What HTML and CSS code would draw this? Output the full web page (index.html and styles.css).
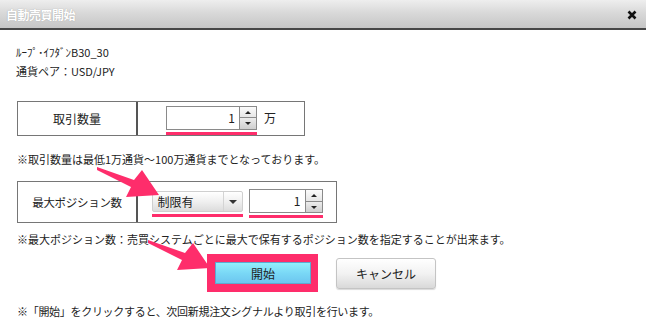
FILE: index.html
```html
<!DOCTYPE html>
<html lang="ja">
<head>
    <meta charset="UTF-8">
    <title>自動売買開始</title>
    <link rel="stylesheet" href="styles.css">
</head>
<body>
    <div class="dialog">
        <div class="titlebar">
            <span class="title">自動売買開始</span>
            <svg class="close" width="10" height="10" viewBox="0 0 10 10">
                <path d="M1.5 1.5 L8.5 8.5 M8.5 1.5 L1.5 8.5" stroke="#111" stroke-width="2.6"/>
            </svg>
        </div>

        <div class="content">
            <div class="info">
                <p>ﾙｰﾌﾟ･ｲﾌﾀﾞﾝB30_30</p>
                <p>通貨ペア：USD/JPY</p>
            </div>

            <div class="form-row row-amount">
                <div class="label">取引数量</div>
                <div class="field">
                    <div class="marked">
                        <div class="number">
                            <span class="value wide">1</span>
                            <div class="spin">
                                <span class="up"></span>
                                <span class="down"></span>
                            </div>
                        </div>
                    </div>
                    <span class="unit">万</span>
                </div>
            </div>
            <p class="note note-amount">※取引数量は最低1万通貨～100万通貨までとなっております。</p>

            <div class="form-row row-position">
                <div class="label">最大ポジション数</div>
                <div class="field">
                    <div class="marked">
                        <div class="select">
                            <span class="select-text">制限有</span>
                            <span class="select-arrow"></span>
                        </div>
                    </div>
                    <div class="marked">
                        <div class="number">
                            <span class="value">1</span>
                            <div class="spin">
                                <span class="up"></span>
                                <span class="down"></span>
                            </div>
                        </div>
                    </div>
                </div>
            </div>
            <p class="note note-position">※最大ポジション数：売買システムごとに最大で保有するポジション数を指定することが出来ます。</p>

            <div class="buttons">
                <div class="highlight">
                    <button class="btn btn-start">開始</button>
                </div>
                <button class="btn btn-cancel">キャンセル</button>
            </div>
            <p class="note note-start">※「開始」をクリックすると、次回新規注文シグナルより取引を行います。</p>
        </div>

        <svg class="arrow arrow-select" width="64" height="32" viewBox="0 0 64 32">
            <polygon points="0,0 37,13 45,3 62,28 29,30 34,20 0,3" fill="#fe2d6b"/>
        </svg>
        <svg class="arrow arrow-start" width="64" height="32" viewBox="0 0 64 32">
            <polygon points="0,0 37,13 45,3 62,28 29,30 34,20 0,3" fill="#fe2d6b"/>
        </svg>
    </div>
</body>
</html>
```

FILE: styles.css
```css
body {
    margin: 0;
    padding: 0;
    background: #fff;
    font-family: 'Noto Sans CJK JP', 'Noto Sans', sans-serif;
    color: #222;
}
p {
    margin: 0;
}
.dialog {
    position: relative;
    width: 646px;
    height: 335px;
    overflow: hidden;
}
.titlebar {
    height: 28px;
    display: flex;
    justify-content: space-between;
    align-items: center;
    padding: 0 9px 0 6px;
    background: linear-gradient(#eeeeee, #d9d9d9 45%, #c6c6c6);
    border-bottom: 2px solid #474747;
}
.title {
    color: #fff;
    font-size: 12px;
    font-weight: bold;
    letter-spacing: -0.5px;
    text-shadow: 0 0 1px #999;
}
.close {
    margin-top: 2px;
}
.content {
    padding: 13px 0 0 17px;
}
.info {
    font-size: 11px;
    line-height: 19px;
    margin-left: -1px;
}

/* Form rows */
.form-row {
    display: flex;
    border: 1px solid #767676;
    box-sizing: border-box;
}
.row-amount {
    margin-top: 20px;
    width: 288px;
    height: 35px;
}
.row-position {
    margin-top: 14px;
    width: 320px;
    height: 42px;
}
.label {
    width: 118px;
    display: flex;
    align-items: center;
    justify-content: center;
    font-size: 12px;
    border-right: 2px solid #555;
}
.row-position .label {
    font-size: 11.5px;
    letter-spacing: -0.3px;
}
.field {
    flex: 1;
    display: flex;
    align-items: center;
    justify-content: center;
    gap: 6px;
}
.row-amount .field {
    gap: 7px;
}
.row-position .field {
    padding-top: 3px;
}
.marked {
    border-bottom: 3px solid #fe2d6b;
    padding-bottom: 2px;
}
.row-amount .marked {
    margin-top: 3px;
}
.number {
    display: flex;
    height: 24px;
    border: 1px solid #8a8a8a;
    box-sizing: border-box;
    background: #fff;
}
.value {
    width: 51px;
    text-align: right;
    padding-right: 4px;
    font-size: 12px;
    line-height: 22px;
}
.value.wide {
    width: 68px;
}
.spin {
    width: 16px;
    display: flex;
    flex-direction: column;
    border-left: 1px solid #8a8a8a;
}
.spin span {
    flex: 1;
    position: relative;
    background: linear-gradient(#fbfbfb, #e6e6e6);
}
.spin .down {
    border-top: 1px solid #8a8a8a;
    background: linear-gradient(#ececec, #cfcfcf);
}
.spin span::after {
    content: "";
    position: absolute;
    left: 5px;
    top: 4px;
    border-left: 3px solid transparent;
    border-right: 3px solid transparent;
}
.spin .up::after {
    border-bottom: 3px solid #222;
}
.spin .down::after {
    border-top: 3px solid #222;
}
.unit {
    font-size: 12px;
    margin-top: -2px;
}
.select {
    width: 91px;
    height: 21px;
    display: flex;
    box-sizing: border-box;
    border: 1px solid #cfcfcf;
    border-radius: 2px;
    background: linear-gradient(#ffffff, #f0f0f0 50%, #dcdcdc);
}
.select-text {
    flex: 1;
    font-size: 12px;
    line-height: 19px;
    padding-left: 5px;
}
.select-arrow {
    width: 18px;
    position: relative;
    border-left: 1px solid #d4d4d4;
}
.select-arrow::after {
    content: "";
    position: absolute;
    left: 5px;
    top: 8px;
    border-left: 4px solid transparent;
    border-right: 4px solid transparent;
    border-top: 4px solid #333;
}
.note {
    font-size: 11px;
    line-height: 16px;
}
.note-amount {
    margin-top: 15px;
}
.note-position {
    margin-top: 8px;
}
.note-start {
    margin-top: 11px;
    letter-spacing: -0.3px;
}

/* Buttons */
.buttons {
    display: flex;
    align-items: center;
    gap: 18px;
    margin-top: 7px;
    padding-left: 190px;
}
.highlight {
    background: #fe2d6b;
    padding: 8px 7px 8px 8px;
}
.btn {
    font-family: inherit;
    font-size: 12px;
    color: #222;
    cursor: pointer;
    padding: 0;
}
.btn-start {
    display: block;
    width: 96px;
    height: 22px;
    border: 1px solid #5da9cf;
    background: linear-gradient(#92effd, #7ad8f6 50%, #6cc6ef);
}
.btn-cancel {
    width: 100px;
    height: 31px;
    border: 1px solid #c4c4c4;
    border-radius: 3px;
    background: linear-gradient(#ffffff, #f2f2f2 50%, #d9d9d9);
    box-shadow: 0 1px 1px rgba(0, 0, 0, 0.15);
}

/* Annotation arrows */
.arrow {
    position: absolute;
}
.arrow-select {
    left: 97px;
    top: 167px;
}
.arrow-start {
    left: 148px;
    top: 240px;
}
```
